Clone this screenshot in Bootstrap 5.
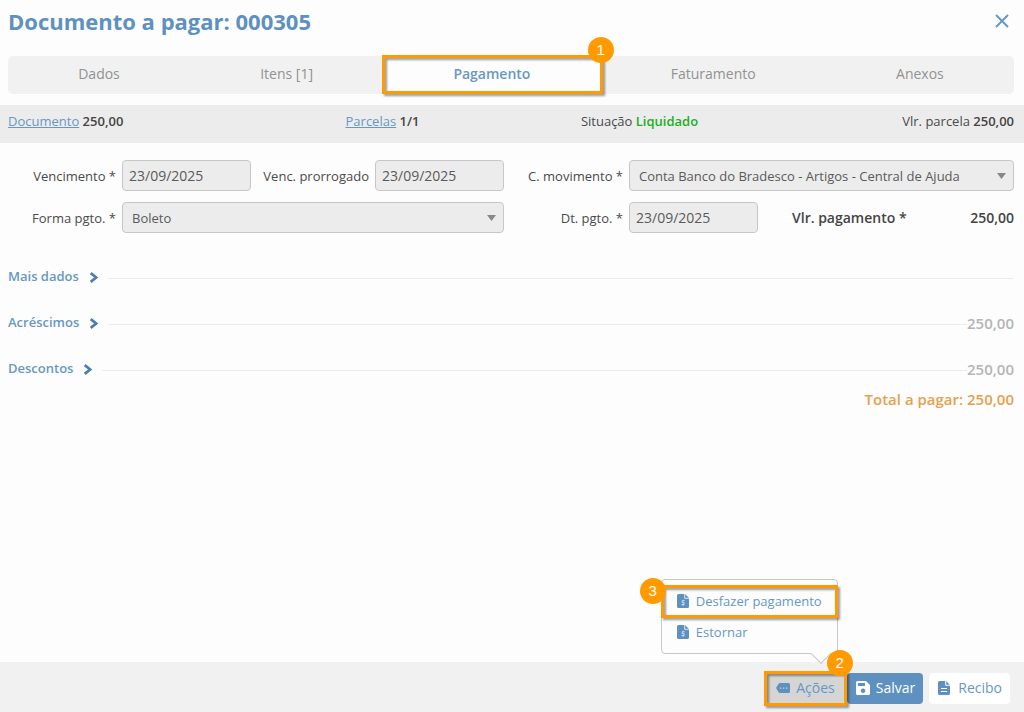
<!DOCTYPE html>
<html lang="pt-BR">
<head>
<meta charset="utf-8">
<meta name="viewport" content="width=device-width, initial-scale=1">
<title>Documento a pagar: 000305</title>
<link href="https://cdn.jsdelivr.net/npm/bootstrap@5.3.0/dist/css/bootstrap.min.css" rel="stylesheet">
<style>
  :root { --azul: #5e91c0; --azul-claro: #6798c4; --destaque: #ff9b00; }
  body { font-family: "Open Sans", "Noto Sans", sans-serif; font-size: 13px; line-height: 20px; color: #4a4a4a; background: #fdfdfd; }
  .conteudo { padding: 0 10px 0 8px; }
  .titulo { font-size: 22px; line-height: 28px; font-weight: 700; color: var(--azul); }
  .fechar { width: 24px; height: 24px; color: var(--azul-claro); background: none; border: 0; padding: 5px; }
  .fechar svg, .icone { display: block; flex-shrink: 0; }
  .topo { padding: 7px 0 21px; }
  .abas { background: #f1f1f1; border-radius: 5px; }
  .abas .nav-link { position: relative; width: 100%; height: 38px; padding: 0 0 2px; border: 0; font-size: 14px; color: #929292; background: none; }
  .abas .nav-link.active { background: #fdfdfd; color: var(--azul-claro); font-weight: 600; border-radius: 0; }
  /* moldura laranja dos passos do tutorial */
  .moldura { position: relative; }
  .moldura::after { content: ""; position: absolute; inset: -1px; border: 3px solid var(--destaque); filter: drop-shadow(2px 2px 1px rgba(0,0,0,.4)); pointer-events: none; }
  .abas .moldura::after { inset: -1px -2px 0 -1px; }
  .rodape .acoes::after { inset: -2px -3px; }
  .passo { position: absolute; z-index: 5; width: 26px; height: 26px; border-radius: 50%; background: var(--destaque); color: #fff; font: 400 15px/26px "Liberation Sans", sans-serif; text-align: center; }
  .abas .passo { right: -13px; top: -19px; }
  .acoes .passo { right: -9px; top: -23px; }
  .acoes-menu .passo { left: -22px; top: -8px; }
  .resumo { display: grid; grid-template-columns: 246fr 257fr 257fr 246fr; margin: 11px 0 17px; padding: 6px 10px 12px 8px; background: #ececec; }
  .resumo a { color: var(--azul-claro); }
  .resumo b, .forte { font-weight: 600; color: #444; }
  .resumo b.ok { color: #1fae1f; }
  .campos { display: grid; grid-template-columns: 108px 129fr 112px 129fr 113px 129fr 250fr; gap: 11px 6px; align-items: center; }
  .campos label { text-align: right; white-space: nowrap; }
  .campos .form-control, .campos .form-select { height: 31px; padding: 0 6px; font-size: 14px; line-height: 20px; color: #5a5a5a; background-color: #ececec; border: 1px solid #c6c6c6; border-radius: 4px; min-width: 0; }
  .campos .form-select { padding: 0 24px 0 9px; font-size: 13px; background-image: url("data:image/svg+xml,%3Csvg xmlns='http://www.w3.org/2000/svg' viewBox='0 0 9 6'%3E%3Cpath d='M0 0h9L4.500 6z' fill='%23888'/%3E%3C/svg%3E"); background-size: 9px 6px; background-position: right 7px center; }
  .vao-2 { grid-column: span 2; }
  .vao-3 { grid-column: span 3; }
  .forte { font-size: 14px; padding-left: 28px; }
  .secoes { padding-top: 33px; }
  .secao { height: 20px; margin-bottom: 26px; }
  .secao button { display: flex; align-items: center; gap: 9px; background: none; border: 0; padding: 0; font-weight: 600; color: var(--azul-claro); }
  .secao button .icone { margin-top: 3px; }
  .secao hr { margin: 5px 0 0 8px; border-color: #ebebeb; opacity: 1; }
  .valor { padding-top: 2px; font-size: 15px; font-weight: 600; color: #b5b5b5; }
  .total { margin-top: -5px; font-size: 15px; font-weight: 600; color: #e5a14b; }
  .rodape { height: 50px; background: #f1f1f1; padding: 2px 14px 0 8px; gap: 6px; }
  .rodape .btn { display: flex; align-items: center; gap: 6px; height: 31px; border: 0; border-radius: 4px; padding: 0 8px 0 9px; font-size: 14px; line-height: 20px; color: var(--azul-claro); background: #fff; }
  .rodape .btn.acoes { background: #d5d5d5; padding-right: 9px; margin-right: -3px; }
  .rodape .btn.salvar { background: #5e91c0; color: #fff; }
  .rodape .btn.recibo { gap: 8px; }
  .acoes-menu { position: absolute; right: 3px; bottom: 50px; width: 177px; height: 75px; padding-top: 6px; background: #fdfdfd; border: 1px solid #c8c8c8; border-radius: 4px; }
  .acoes-menu button { display: flex; align-items: center; gap: 7px; width: 100%; height: 31px; border: 0; padding: 0 15px; background: none; font-size: 13px; white-space: nowrap; color: var(--azul-claro); }
  .acoes-menu::after { content: ""; position: absolute; right: 9px; bottom: -8px; width: 14px; height: 14px; background: #fdfdfd; border: solid #c8c8c8; border-width: 0 1px 1px 0; transform: rotate(45deg); }
</style>
</head>
<body class="d-flex flex-column min-vh-100">
<svg class="d-none" aria-hidden="true">
  <symbol id="doc" viewBox="0 0 12 14"><path d="M1.500 0H8l4 4v8.500a1.500 1.500 0 0 1-1.500 1.500h-9A1.500 1.500 0 0 1 0 12.500v-11A1.500 1.500 0 0 1 1.500 0z" fill="#5e91c0"/><path d="M7.700 0v4.300H12" fill="none" stroke="#fdfdfd" stroke-width=".8"/><path d="M7.700 6.800H5.300v1.900h1.800v1.900H4.500M6.100 5.800v1M6.100 10.600v1.200" fill="none" stroke="#dce8f3" stroke-width=".9"/></symbol>
  <symbol id="seta" viewBox="0 0 8 10"><path d="M1 1l5 4-5 4" fill="none" stroke="#4c7dab" stroke-width="2.400"/></symbol>
</svg>
<div class="conteudo">
  <header class="topo d-flex justify-content-between align-items-center">
    <h1 class="titulo m-0">Documento a pagar: 000305</h1>
    <button class="fechar" type="button" aria-label="Fechar"><svg viewBox="0 0 14 14" width="14" height="14"><path d="M1 1l12 12M13 1L1 13" stroke="currentColor" stroke-width="2"/></svg></button>
  </header>
  <ul class="abas nav nav-fill">
    <li class="nav-item"><button class="nav-link" type="button">Dados</button></li>
    <li class="nav-item"><button class="nav-link" type="button">Itens [1]</button></li>
    <li class="nav-item position-relative"><button class="nav-link active moldura" type="button">Pagamento</button><span class="passo">1</span></li>
    <li class="nav-item"><button class="nav-link" type="button">Faturamento</button></li>
    <li class="nav-item"><button class="nav-link" type="button">Anexos</button></li>
  </ul>
</div>
<div class="resumo">
  <div><a href="#">Documento</a> <b>250,00</b></div>
  <div class="text-center"><a href="#">Parcelas</a> <b>1/1</b></div>
  <div class="text-center">Situação <b class="ok">Liquidado</b></div>
  <div class="text-end">Vlr. parcela <b>250,00</b></div>
</div>
<main class="conteudo flex-grow-1">
  <form class="campos">
    <label for="venc">Vencimento *</label>
    <input class="form-control" id="venc" value="23/09/2025" readonly>
    <label for="prorr">Venc. prorrogado</label>
    <input class="form-control" id="prorr" value="23/09/2025" readonly>
    <label for="mov">C. movimento *</label>
    <select class="form-select vao-2" id="mov"><option>Conta Banco do Bradesco - Artigos - Central de Ajuda</option></select>
    <label for="forma">Forma pgto. *</label>
    <select class="form-select vao-3" id="forma"><option>Boleto</option></select>
    <label for="dt">Dt. pgto. *</label>
    <input class="form-control" id="dt" value="23/09/2025" readonly>
    <div class="forte d-flex justify-content-between"><span>Vlr. pagamento *</span><span>250,00</span></div>
  </form>
  <section class="secoes">
    <div class="secao d-flex align-items-center"><button type="button">Mais dados<svg class="icone" width="12" height="11"><use href="#seta"/></svg></button><hr class="flex-grow-1"></div>
    <div class="secao d-flex align-items-center"><button type="button">Acréscimos<svg class="icone" width="12" height="11"><use href="#seta"/></svg></button><hr class="flex-grow-1"><span class="valor">250,00</span></div>
    <div class="secao d-flex align-items-center mb-0"><button type="button">Descontos<svg class="icone" width="12" height="11"><use href="#seta"/></svg></button><hr class="flex-grow-1"><span class="valor">250,00</span></div>
    <div class="total text-end pt-3">Total a pagar: 250,00</div>
  </section>
</main>
<footer class="rodape d-flex justify-content-end align-items-center">
  <div class="position-relative">
    <div class="acoes-menu">
      <button class="moldura" type="button"><svg class="icone" width="12" height="14"><use href="#doc"/></svg>Desfazer pagamento<span class="passo">3</span></button>
      <button type="button"><svg class="icone" width="12" height="14"><use href="#doc"/></svg>Estornar</button>
    </div>
    <button class="btn acoes moldura" type="button"><svg class="icone" width="14" height="10" viewBox="0 0 14 10"><path d="M4 0h8.500A1.500 1.500 0 0 1 14 1.500v7a1.500 1.500 0 0 1-1.500 1.500H4Q3 10 2.500 9L0 5l2.500-4Q3 0 4 0z" fill="#5e91c0"/><path d="M4 4.400h1.400v1.400H4zM7 4.400h1.400v1.400H7zM10 4.400h1.400v1.400H10z" fill="#c3d0dc"/></svg>Ações<span class="passo">2</span></button>
  </div>
  <button class="btn salvar" type="button"><svg class="icone" width="14" height="14" viewBox="0 0 14 14"><path fill-rule="evenodd" d="M1.500 0H10l4 4v8.500a1.500 1.500 0 0 1-1.500 1.500h-11A1.500 1.500 0 0 1 0 12.500v-11A1.500 1.500 0 0 1 1.500 0zM2 2v3h7V2zM7 7.500a2.300 2.300 0 1 0 .1 0z" fill="#fff"/></svg>Salvar</button>
  <button class="btn recibo" type="button"><svg class="icone" width="12" height="14" viewBox="0 0 12 14"><path d="M1.500 0H8l4 4v8.500a1.500 1.500 0 0 1-1.500 1.500h-9A1.500 1.500 0 0 1 0 12.500v-11A1.500 1.500 0 0 1 1.500 0z" fill="#5e91c0"/><path d="M7.700 0v4.300H12M3 7.500h6M3 10.500h6" fill="none" stroke="#fff"/></svg>Recibo</button>
</footer>
<script src="https://cdn.jsdelivr.net/npm/bootstrap@5.3.0/dist/js/bootstrap.bundle.min.js"></script>
</body>
</html>
